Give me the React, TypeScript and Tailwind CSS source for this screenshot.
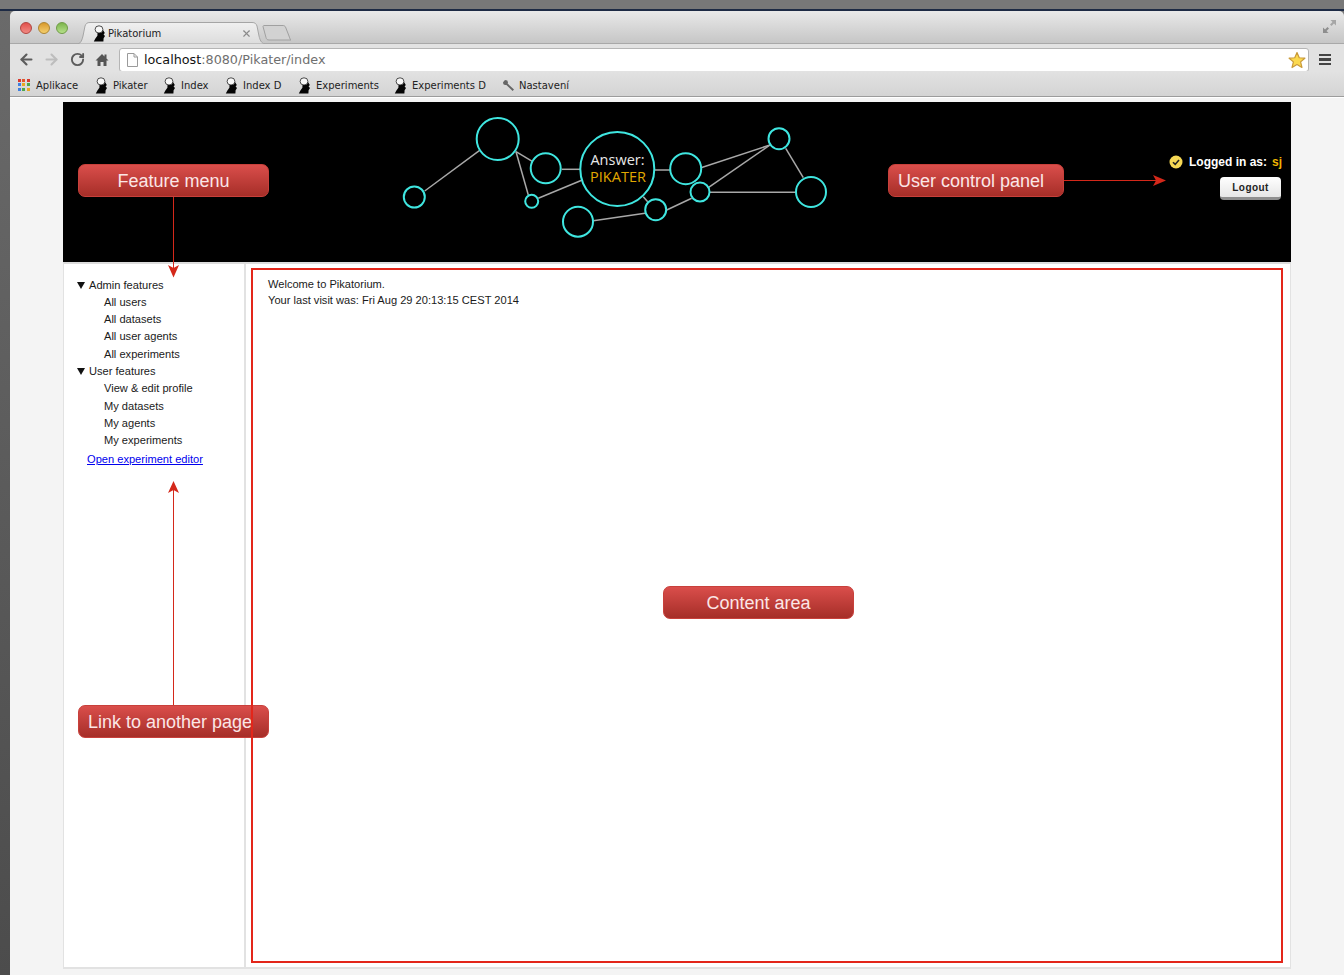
import React from "react";
import { ArrowLeft, ArrowRight, RotateCw, X } from "lucide-react";

const PikaterIcon = () => (
  <svg width="13" height="17" viewBox="0 0 13 17" className="shrink-0">
    <path d="M4.5 7.5L10 5L11.8 8L10.6 9.6L12 11L10.6 13.2L10.4 16.5H.8L2.4 13.4L4.4 10.8Z" fill="#050505" />
    <ellipse cx="6" cy="4.4" rx="3.9" ry="3.6" fill="#f8f8f8" stroke="#222" strokeWidth="0.8" />
  </svg>
);

const AppsIcon = () => (
  <div className="grid grid-cols-3 gap-[1px] w-[12px] h-[12px] shrink-0">
    {["#d9392f", "#e2562c", "#d9392f", "#3f7fe0", "#e8a723", "#4aa84f", "#3f7fe0", "#4aa84f", "#e8a723"].map((c, i) => (
      <span key={i} className="block w-[3px] h-[3px]" style={{ backgroundColor: c }} />
    ))}
  </div>
);

const WrenchIcon = () => (
  <svg width="13" height="13" viewBox="0 0 13 13" className="shrink-0">
    <path d="M1 3.2L3 1L5.3 1.4L6 3.5L5.6 4.6L12 10.4L10.6 12L4.4 5.9L3 6L1.4 5.2Z" fill="#666" />
  </svg>
);

const bookmarks = [
  { label: "Pikater", width: "w-[68px]" },
  { label: "Index", width: "w-[62px]" },
  { label: "Index D", width: "w-[73px]" },
  { label: "Experiments", width: "w-[96px]" },
  { label: "Experiments D", width: "w-[108px]" },
];

const Tab = () => (
  <div className="relative w-[187px] h-[22px] ml-[68px] mt-[11px] shrink-0">
    <svg className="absolute inset-0" width="187" height="22" viewBox="0 0 187 22">
      <defs>
        <linearGradient id="tabFill" x1="0" y1="0" x2="0" y2="1">
          <stop offset="0" stopColor="#f0f0f0" />
          <stop offset="1" stopColor="#dcdcdc" />
        </linearGradient>
      </defs>
      <path d="M0 22C3 21 4 18 5 14L7 4C8 1.5 9 .5 12 .5H174C177 .5 178 1.5 179 4L181 14C182 18 183 21 187 22Z" fill="url(#tabFill)" stroke="#a5a5a5" />
    </svg>
    <div className="relative flex items-center h-full pl-[15px] pr-[13px]">
      <PikaterIcon />
      <span className="ml-[2px] text-[10px] text-[#222] font-['DejaVu_Sans',sans-serif]">Pikatorium</span>
      <X size={11} strokeWidth={2.5} className="ml-auto text-[#8a8a8a]" />
    </div>
  </div>
);

const BrowserChrome = () => (
  <div className="shrink-0 flex flex-col">
    <div className="h-[33px] flex rounded-t-[5px] bg-gradient-to-b from-[#e9e9e9] to-[#c6c6c6] border-b border-[#a8a8a8] relative">
      <div className="flex gap-[6px] pl-[10px] pt-[11px] absolute">
        <span className="block w-[12px] h-[12px] rounded-full bg-gradient-to-b from-[#e2504c] to-[#f08a84] border border-[#b2443f]" />
        <span className="block w-[12px] h-[12px] rounded-full bg-gradient-to-b from-[#d99a2a] to-[#f4cf6c] border border-[#ad8430]" />
        <span className="block w-[12px] h-[12px] rounded-full bg-gradient-to-b from-[#7db54c] to-[#b6e08a] border border-[#6f9c46]" />
      </div>
      <Tab />
      <svg className="ml-[-3px] mt-[14px] shrink-0" width="30" height="16" viewBox="0 0 30 16">
        <path d="M1 1.5C1 1 1.5 .5 2 .5H21C22 .5 23 1 23.5 2L27 11C28 14 28.5 15 29 15H7C5 15 4.5 14 4 12.5Z" fill="#d2d2d2" stroke="#a0a0a0" />
      </svg>
      <svg className="absolute right-[7px] top-[8px]" width="15" height="15" viewBox="0 0 15 15">
        <path d="M8.5 1H14V6.5L12 4.5L9.5 7L8 5.5L10.5 3Z" fill="#a6a6a6" />
        <path d="M1 8.5V14H6.5L4.5 12L7 9.5L5.5 8L3 10.5Z" fill="#8d8d8d" />
      </svg>
    </div>
    <div className="h-[27px] flex items-center bg-[#e2e2e2] pt-[4px]">
      <ArrowLeft size={17} strokeWidth={3} className="ml-[8px] text-[#5c5c5c]" />
      <ArrowRight size={17} strokeWidth={3} className="ml-[8px] text-[#bdbdbd]" />
      <RotateCw size={15} strokeWidth={3} className="ml-[10px] text-[#5c5c5c]" />
      <svg className="ml-[10px]" width="14" height="14" viewBox="0 0 14 14">
        <path d="M7 1L9.5 3.5V1.5H11.5V5.5L13.5 7.5H11.5V13H8.5V9H5.5V13H2.5V7.5H.5Z" fill="#555" />
      </svg>
      <div className="ml-[10px] w-[1190px] h-[24px] flex items-center rounded-[3px] bg-white border border-[#b5b5b5]">
        <svg className="ml-[7px]" width="11" height="14" viewBox="0 0 11 14">
          <path d="M.5.5H7L10.5 4V13.5H.5Z" fill="#fdfdfd" stroke="#9a9a9a" />
          <path d="M7 .5V4H10.5" fill="none" stroke="#9a9a9a" />
        </svg>
        <span className="ml-[6px] text-[12.75px] font-['DejaVu_Sans',sans-serif] text-[#6f6f6f]">
          <span className="text-[#111]">localhost</span>:8080/Pikater/index
        </span>
        <svg className="ml-auto mr-[2px]" width="18" height="18" viewBox="0 0 24 24">
          <path d="M12 2L15 9L22.5 9.6L16.8 14.5L18.6 22L12 18L5.4 22L7.2 14.5L1.5 9.6L9 9Z" fill="#fbd94f" stroke="#c99a3a" strokeWidth="1.6" strokeLinejoin="round" />
        </svg>
      </div>
      <div className="ml-[10px] flex flex-col gap-[2px]">
        <span className="block w-[12px] h-[2.5px] bg-[#444]" />
        <span className="block w-[12px] h-[2.5px] bg-[#444]" />
        <span className="block w-[12px] h-[2.5px] bg-[#444]" />
      </div>
    </div>
    <div className="h-[26px] flex items-center pl-[8px] pt-[3px] bg-gradient-to-b from-[#e2e2e2] to-[#d4d4d4] border-b border-[#9c9c9c] text-[10px] text-[#222] font-['DejaVu_Sans',sans-serif]">
      <div className="flex items-center gap-[6px] w-[77px]">
        <AppsIcon />
        <span>Aplikace</span>
      </div>
      {bookmarks.map((b) => (
        <div key={b.label} className={`flex items-center gap-[5px] ${b.width}`}>
          <PikaterIcon />
          <span>{b.label}</span>
        </div>
      ))}
      <div className="flex items-center gap-[4px]">
        <WrenchIcon />
        <span>Nastavení</span>
      </div>
    </div>
  </div>
);

const nodes: [number, number, number][] = [
  [497.7, 139, 21],
  [545.7, 168.3, 15],
  [617.3, 169, 37],
  [685.7, 168.7, 15.5],
  [779, 138.7, 10.5],
  [811, 192, 15],
  [700, 192, 9.5],
  [655.7, 209.7, 10.5],
  [578, 221.7, 15],
  [531.7, 201.3, 6.5],
  [414.3, 197, 10.5],
];

const edges: [number, number, number, number][] = [
  [424.7, 191, 479.3, 150.7],
  [516, 151.7, 532.7, 161.7],
  [516, 151.7, 528.3, 195],
  [561.7, 169.3, 580.7, 169.3],
  [538.3, 198.3, 582.3, 180],
  [655, 170, 670.7, 170],
  [701, 167.7, 770, 145],
  [708.3, 187.7, 770, 145],
  [785.7, 148.3, 803.3, 177.7],
  [709.3, 192.3, 796, 192.3],
  [666.7, 210, 691.7, 198.3],
  [593.3, 220.7, 645, 213.3],
  [643.3, 196.7, 647.7, 201.7],
];

const Logo = () => (
  <svg className="ml-[337px] shrink-0" width="430" height="160" viewBox="400 102 430 160">
    {edges.map(([x1, y1, x2, y2], i) => (
      <line key={i} x1={x1} y1={y1} x2={x2} y2={y2} stroke="#a8a8a8" strokeWidth="1.5" />
    ))}
    {nodes.map(([cx, cy, r], i) => (
      <circle key={i} cx={cx} cy={cy} r={r} fill="none" stroke="#3fe6e0" strokeWidth="2" />
    ))}
    <text x="617.5" y="165" textAnchor="middle" fontSize="14.5" fill="#e8e8e8" fontFamily="'Open Sans', sans-serif">Answer:</text>
    <text x="618" y="181.5" textAnchor="middle" fontSize="14.5" fill="#e0a800" fontFamily="'Open Sans', sans-serif">PIKATER</text>
  </svg>
);

const Header = () => (
  <div className="h-[160px] shrink-0 bg-black flex">
    <Logo />
    <div className="ml-auto pr-[9px] pt-[52px] flex flex-col items-end font-['Liberation_Sans',sans-serif]">
      <div className="flex items-center h-[16px] text-[12px] font-bold text-white">
        <svg width="14" height="14" viewBox="0 0 14 14" className="mr-[6px]">
          <circle cx="7" cy="7" r="6.5" fill="#f6d855" />
          <path d="M4 7.2L6.2 9.4L10 5" fill="none" stroke="#222" strokeWidth="1.6" />
        </svg>
        <span>Logged in as:</span>
        <span className="ml-[5px] text-[#f0b400]">sj</span>
      </div>
      <button className="mt-[7px] mr-[1px] w-[61px] h-[23px] rounded-[4px] bg-gradient-to-b from-white to-[#e6e6e6] border-b-[3px] border-[#8f8f8f] text-[10px] font-bold tracking-[0.4px] text-[#222]">
        Logout
      </button>
    </div>
  </div>
);

type MenuGroup = { title: string; items: string[] };

const menu: MenuGroup[] = [
  { title: "Admin features", items: ["All users", "All datasets", "All user agents", "All experiments"] },
  { title: "User features", items: ["View & edit profile", "My datasets", "My agents", "My experiments"] },
];

const Sidebar = () => (
  <div className="w-[182px] shrink-0 border-r-2 border-[#e2e2e2] pt-[13px] pl-[13px] text-[11.1px] text-[#1a1a1a]">
    {menu.map((g, i) => (
      <div key={g.title} className={i > 0 ? "mt-[1px]" : ""}>
        <div className="flex items-center h-[16.4px]">
          <span className="block w-0 h-0 border-x-[4px] border-x-transparent border-t-[7px] border-t-[#111] mr-[4px]" />
          {g.title}
        </div>
        {g.items.map((item) => (
          <div key={item} className="flex items-center h-[17.3px] pl-[27px]">
            {item}
          </div>
        ))}
      </div>
    ))}
    <a href="#" className="block mt-[2px] ml-[10px] leading-[17px] text-[#0000ee] underline">
      Open experiment editor
    </a>
  </div>
);

const Callout = ({ text, className }: { text: string; className: string }) => (
  <div
    className={`absolute h-[33px] flex items-center pt-[1px] rounded-[7px] border border-[#c8403b] bg-gradient-to-b from-[#da4e4b] to-[#a62e28] text-[18px] text-[#fbe6e6] font-['Liberation_Sans',sans-serif] ${className}`}
  >
    {text}
  </div>
);

const Annotations = () => (
  <>
    <svg className="absolute left-0 top-0 pointer-events-none" width="1344" height="975" viewBox="0 0 1344 975">
      <g stroke="#d4281a" strokeWidth="1">
        <line x1="173.5" y1="197" x2="173.5" y2="270" />
        <line x1="173.5" y1="490" x2="173.5" y2="706" />
        <line x1="1064" y1="180.5" x2="1158" y2="180.5" />
      </g>
      <g fill="#d4281a">
        <path d="M173.5 277.5L168 265L173.5 268L179 265Z" />
        <path d="M173.5 481L168 493L173.5 490L179 493Z" />
        <path d="M1166 180.5L1153 175L1156 180.5L1153 186Z" />
      </g>
    </svg>
    <Callout text="Feature menu" className="left-[78px] top-[164px] w-[191px] justify-center" />
    <Callout text="User control panel" className="left-[888px] top-[164px] w-[176px] pl-[9px]" />
    <Callout text="Content area" className="left-[663px] top-[586px] w-[191px] justify-center" />
    <Callout text="Link to another page" className="left-[78px] top-[705px] w-[191px] pl-[9px] whitespace-nowrap" />
  </>
);

export default function App() {
  return (
    <div className="relative w-[1344px] h-[975px] overflow-hidden flex flex-col bg-[#777] font-['Liberation_Sans',sans-serif]">
      <div className="h-[9px] shrink-0 bg-[#787878]" />
      <div className="h-[2px] shrink-0 bg-[#1d2a44]" />
      <div className="flex-1 flex min-h-0">
        <div className="w-[10px] shrink-0 bg-gradient-to-b from-[#6a6a6a] to-[#4c4c4c]" />
        <div className="flex-1 flex flex-col min-w-0">
          <BrowserChrome />
          <div className="flex-1 flex flex-col bg-[#f4f4f4] border-t border-white pl-[53px] pr-[53px] pt-[4px] pb-[6px] min-h-0">
            <Header />
            <div className="flex-1 flex min-h-0 bg-white border-x border-b-2 border-[#e2e2e2] border-t-2 border-t-[#dcdcdc]">
              <Sidebar />
              <div className="flex-1 pl-[5px] pr-[7px] pt-[4px] pb-[4px]">
                <div className="relative z-10 h-full border-2 border-[#e3261a] pl-[15px] pt-[6px] text-[11.1px] leading-[16px] text-[#1a1a1a]">
                  <div>Welcome to Pikatorium.</div>
                  <div>Your last visit was: Fri Aug 29 20:13:15 CEST 2014</div>
                </div>
              </div>
            </div>
          </div>
        </div>
      </div>
      <Annotations />
    </div>
  );
}
